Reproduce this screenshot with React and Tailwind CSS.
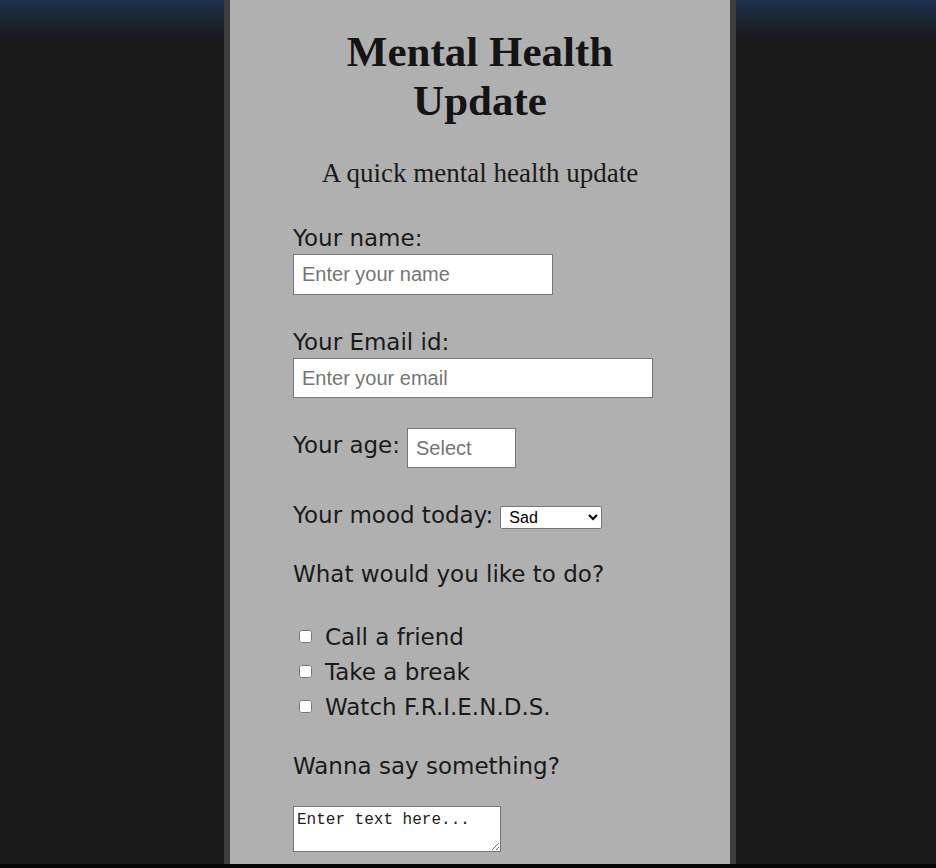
export default function App() {
  const label = "text-[23px] leading-[28px] text-[#1a1a1a] [font-family:'Comic_Sans_MS','DejaVu_Sans',sans-serif]";
  return (
    <div className="w-[936px] h-[868px] overflow-hidden bg-[#1a1a1a] flex flex-col">
      <div className="relative flex-1 bg-[linear-gradient(to_bottom,#1b3050_0px,#1c2330_22px,#1a1a1a_40px)]">
        <div className="ml-[224px] w-[512px] h-[864px] border-x-[6px] border-[#3e3e3e] bg-[#b0b0b0]">
          <h1 className="pt-[27px] text-center text-[43px] leading-[49px] font-bold text-[#141414] [font-family:'Liberation_Serif',serif]">
            Mental Health
            <br />
            Update
          </h1>
          <p className="mt-[33px] text-center text-[27px] leading-[30px] text-[#1a1a1a] [font-family:'Liberation_Serif',serif]">
            A quick mental health update
          </p>
          <div className="pl-[63px]">
            <div className={`mt-[36px] ${label}`}>Your name:</div>
            <input
              className="mt-[2px] block w-[260px] h-[41px] bg-white border border-[#767676] px-[8px] text-[20px] text-black placeholder:text-[#757575] [font-family:'Liberation_Sans',Arial,sans-serif]"
              placeholder="Enter your name"
            />
            <div className={`mt-[33px] ${label}`}>Your Email id:</div>
            <input
              className="mt-[2px] block w-[360px] h-[40px] bg-white border border-[#767676] px-[8px] text-[20px] text-black placeholder:text-[#757575] [font-family:'Liberation_Sans',Arial,sans-serif]"
              placeholder="Enter your email"
            />
            <div className="mt-[30px] flex items-center gap-[7px]">
              <span className={`${label} -mt-[6px]`}>Your age:</span>
              <input
                className="w-[109px] h-[40px] bg-white border border-[#767676] px-[8px] text-[20px] text-black placeholder:text-[#757575] [font-family:'Liberation_Sans',Arial,sans-serif]"
                placeholder="Select"
              />
            </div>
            <div className="mt-[33px] flex items-center gap-[7px]">
              <span className={`${label}`}>Your mood today:</span>
              <select className="mt-[4px] w-[102px] h-[23px] bg-white border border-[#767676] rounded-[2px] pl-[4px] text-[16px] text-black [font-family:'Liberation_Sans',Arial,sans-serif] appearance-auto">
                <option>Sad</option>
                <option>Happy</option>
              </select>
            </div>
            <div className={`mt-[31px] ${label}`}>What would you like to do?</div>
            <div className="mt-[31px] flex flex-col">
              {["Call a friend", "Take a break", "Watch F.R.I.E.N.D.S."].map((t) => (
                <label key={t} className="flex items-center h-[35px]">
                  <input type="checkbox" className="ml-[6px] w-[13px] h-[13px] appearance-auto" />
                  <span className={`ml-[13px] ${label}`}>{t}</span>
                </label>
              ))}
            </div>
            <div className={`mt-[28px] ${label}`}>Wanna say something?</div>
            <textarea
              className="mt-[26px] block w-[208px] h-[46px] bg-white border border-[#767676] px-[3px] pt-[4px] text-[16px] leading-[18px] text-black placeholder:text-[#222] [font-family:'Liberation_Mono',monospace]"
              placeholder="Enter text here..."
            />
          </div>
        </div>
      </div>
      <div className="h-[4px] bg-[#050505]" />
    </div>
  );
}
